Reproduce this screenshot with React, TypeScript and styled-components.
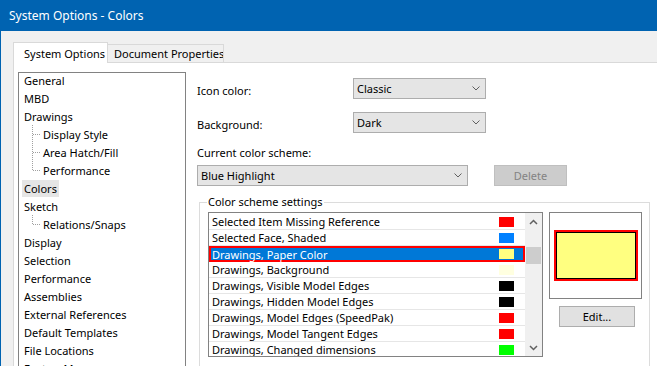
import React from 'react'
import styled, { createGlobalStyle } from 'styled-components'

const FONT = `"Noto Sans", "Liberation Sans", sans-serif`

const GlobalStyle = createGlobalStyle`
  html, body {
    margin: 0;
    padding: 0;
    background: #f0f0f0;
    overflow: hidden;
  }
  #root {
    width: 657px;
    height: 366px;
  }
`

const treeItems: { label: string; child?: boolean; last?: boolean; selected?: boolean }[] = [
  { label: 'General' },
  { label: 'MBD' },
  { label: 'Drawings' },
  { label: 'Display Style', child: true },
  { label: 'Area Hatch/Fill', child: true },
  { label: 'Performance', child: true, last: true },
  { label: 'Colors', selected: true },
  { label: 'Sketch' },
  { label: 'Relations/Snaps', child: true, last: true },
  { label: 'Display' },
  { label: 'Selection' },
  { label: 'Performance' },
  { label: 'Assemblies' },
  { label: 'External References' },
  { label: 'Default Templates' },
  { label: 'File Locations' },
  { label: 'FeatureManager' },
]

const schemeItems = [
  { label: 'Selected Item Missing Reference', color: '#ff0000' },
  { label: 'Selected Face, Shaded', color: '#0080ff' },
  { label: 'Drawings, Paper Color', color: '#ffff80', selected: true },
  { label: 'Drawings, Background', color: '#ffffe0' },
  { label: 'Drawings, Visible Model Edges', color: '#000000' },
  { label: 'Drawings, Hidden Model Edges', color: '#000000' },
  { label: 'Drawings, Model Edges (SpeedPak)', color: '#ff0000' },
  { label: 'Drawings, Model Tangent Edges', color: '#ff0000' },
  { label: 'Drawings, Changed dimensions', color: '#00ff00' },
]

const Chevron = ({ up }: { up?: boolean }) => (
  <svg width="8" height="5" viewBox="0 0 8 5">
    <polyline
      points={up ? '0.5,4.5 4,1 7.5,4.5' : '0.5,0.5 4,4 7.5,0.5'}
      fill="none"
      stroke="#606060"
      strokeWidth="1"
    />
  </svg>
)

const ScrollArrow = ({ up }: { up?: boolean }) => (
  <svg width="9" height="6" viewBox="0 0 9 6">
    <polyline
      points={up ? '1,5 4.5,1.5 8,5' : '1,1 4.5,4.5 8,1'}
      fill="none"
      stroke="#606060"
      strokeWidth="1.5"
    />
  </svg>
)

const Connector = ({ last }: { last?: boolean }) => (
  <svg width="9" height="18" viewBox="0 0 9 18">
    <line x1="0.5" y1="0" x2="0.5" y2={last ? 9 : 18} stroke="#a0a0a0" strokeDasharray="1 1" />
    <line x1="1" y1="9.5" x2="9" y2="9.5" stroke="#a0a0a0" strokeDasharray="1 1" />
  </svg>
)

const App: React.FC = () => {
  return (
    <>
      <GlobalStyle />
      <Window>
        <TitleBar>System Options - Colors</TitleBar>
        <TabStrip>
          <Tab active>System Options</Tab>
          <Tab>Document Properties</Tab>
        </TabStrip>
        <Panel>
          <Tree>
            <TreeList>
              {treeItems.map((item, i) => (
                <TreeRow key={i}>
                  {item.child && <Connector last={item.last} />}
                  <TreeLabel selected={item.selected}>{item.label}</TreeLabel>
                </TreeRow>
              ))}
            </TreeList>
          </Tree>

          <Settings>
            <FieldRow>
              <FieldLabel>Icon color:</FieldLabel>
              <Select width={133}>
                <span>Classic</span>
                <Chevron />
              </Select>
            </FieldRow>
            <FieldRow spaced>
              <FieldLabel>Background:</FieldLabel>
              <Select width={133}>
                <span>Dark</span>
                <Chevron />
              </Select>
            </FieldRow>

            <SchemeLabel>Current color scheme:</SchemeLabel>
            <SchemeRow>
              <Select width={271}>
                <span>Blue Highlight</span>
                <Chevron />
              </Select>
              <Button disabled width={73}>Delete</Button>
            </SchemeRow>

            <Group>
              <Legend>Color scheme settings</Legend>
              <GroupBody>
                <ListBox>
                  <ListRows>
                    {schemeItems.map((item, i) => (
                      <ListRow key={i} selected={item.selected}>
                        <span>{item.label}</span>
                        <Swatch style={{ background: item.color }} />
                      </ListRow>
                    ))}
                  </ListRows>
                  <ScrollBar>
                    <ScrollButton>
                      <ScrollArrow up />
                    </ScrollButton>
                    <ScrollThumb />
                    <ScrollTrack />
                    <ScrollButton>
                      <ScrollArrow />
                    </ScrollButton>
                  </ScrollBar>
                </ListBox>

                <PreviewColumn>
                  <Preview>
                    <PreviewSwatch />
                  </Preview>
                  <EditButton width={76}>Edit...</EditButton>
                </PreviewColumn>
              </GroupBody>
            </Group>
          </Settings>
        </Panel>
      </Window>
    </>
  )
}

const Window = styled.div`
  width: 657px;
  height: 366px;
  box-sizing: border-box;
  border-left: 1px solid #0063b1;
  display: flex;
  flex-direction: column;
  background: #f0f0f0;
  overflow: hidden;
  font-family: ${FONT};
  font-size: 11px;
  color: #000;
`

const TitleBar = styled.div`
  height: 31px;
  flex: none;
  display: flex;
  align-items: center;
  padding-left: 8px;
  background: #0063b1;
  color: #fff;
  font-size: 12px;
`

const TabStrip = styled.div`
  height: 31px;
  flex: none;
  display: flex;
  align-items: flex-end;
  padding-left: 12px;
`

const Tab = styled.div<{ active?: boolean }>`
  box-sizing: border-box;
  position: relative;
  height: ${(p) => (p.active ? 21 : 18)}px;
  margin-bottom: ${(p) => (p.active ? -1 : 0)}px;
  padding-left: ${(p) => (p.active ? 10 : 6)}px;
  width: ${(p) => (p.active ? 95 : 116)}px;
  border: 1px solid #d9d9d9;
  border-bottom: none;
  border-left: ${(p) => (p.active ? '1px solid #d9d9d9' : 'none')};
  background: ${(p) => (p.active ? '#fff' : '#f0f0f0')};
  display: flex;
  align-items: center;
  white-space: nowrap;
  overflow: hidden;
  z-index: ${(p) => (p.active ? 1 : 0)};
`

const Panel = styled.div`
  flex: 1;
  margin-left: 12px;
  border-top: 1px solid #d9d9d9;
  border-left: 1px solid #d9d9d9;
  background: #fff;
  display: flex;
  align-items: flex-start;
  padding: 9px 0 0 4px;
  min-height: 0;
`

const Tree = styled.div`
  box-sizing: border-box;
  width: 168px;
  height: 320px;
  flex: none;
  border: 1px solid #828282;
  overflow: hidden;
`

const TreeList = styled.div`
  margin-top: -2px;
`

const TreeRow = styled.div`
  height: 18px;
  display: flex;
  align-items: center;
  padding-left: 3px;
  white-space: nowrap;

  svg {
    margin-left: 10px;
    flex: none;
  }
`

const TreeLabel = styled.span<{ selected?: boolean }>`
  padding: 0 2px;
  line-height: 17px;
  background: ${(p) => (p.selected ? '#e5e5e5' : 'transparent')};
`

const Settings = styled.div`
  margin: 6px 0 0 11px;
  display: flex;
  flex-direction: column;
`

const FieldRow = styled.div<{ spaced?: boolean }>`
  height: 21px;
  display: flex;
  align-items: center;
  margin-top: ${(p) => (p.spaced ? 13 : 0)}px;
`

const FieldLabel = styled.span`
  width: 156px;
  padding-top: 4px;
`

const Select = styled.div<{ width: number }>`
  box-sizing: border-box;
  width: ${(p) => p.width}px;
  height: 21px;
  border: 1px solid #adadad;
  background: #e5e5e5;
  display: flex;
  align-items: center;
  justify-content: space-between;
  padding: 0 5px 0 3px;
`

const SchemeLabel = styled.div`
  margin-top: 12px;
  line-height: 16px;
`

const SchemeRow = styled.div`
  display: flex;
  align-items: center;
  gap: 26px;
  margin-top: 4px;
`

const Button = styled.div<{ width: number; disabled?: boolean }>`
  box-sizing: border-box;
  width: ${(p) => p.width}px;
  height: 21px;
  display: flex;
  align-items: center;
  justify-content: center;
  border: 1px solid ${(p) => (p.disabled ? '#bfbfbf' : '#adadad')};
  background: ${(p) => (p.disabled ? '#cccccc' : '#e1e1e1')};
  color: ${(p) => (p.disabled ? '#838383' : '#000')};
`

const Group = styled.fieldset`
  box-sizing: border-box;
  width: 451px;
  height: 200px;
  margin: 8px 0 0 2px;
  padding: 2px 7px 0 7px;
  border: 1px solid #dcdcdc;
  min-width: 0;
`

const Legend = styled.legend`
  padding: 0 1px;
  line-height: 16px;
`

const GroupBody = styled.div`
  display: flex;
  align-items: flex-start;
`

const ListBox = styled.div`
  box-sizing: border-box;
  width: 338px;
  height: 145px;
  margin-left: 1px;
  border: 1px solid #828282;
  display: flex;
  overflow: hidden;
`

const ListRows = styled.div`
  flex: 1;
  padding-top: 1px;
  display: flex;
  flex-direction: column;
`

const ListRow = styled.div<{ selected?: boolean }>`
  box-sizing: border-box;
  height: 16px;
  flex: none;
  display: flex;
  align-items: center;
  justify-content: space-between;
  padding: 0 ${(p) => (p.selected ? 9 : 11)}px 0 ${(p) => (p.selected ? 1 : 3)}px;
  border: ${(p) => (p.selected ? '2px solid #ff0000' : 'none')};
  border-bottom: ${(p) => (p.selected ? '2px solid #ff0000' : '1px solid #e6e6e6')};
  background: ${(p) => (p.selected ? '#0078d7' : 'transparent')};
  color: ${(p) => (p.selected ? '#fff' : '#000')};
  white-space: nowrap;
`

const Swatch = styled.span`
  width: 15px;
  height: 10px;
  flex: none;
`

const ScrollBar = styled.div`
  width: 17px;
  flex: none;
  background: #f0f0f0;
  display: flex;
  flex-direction: column;
`

const ScrollButton = styled.div`
  height: 17px;
  flex: none;
  display: flex;
  align-items: center;
  justify-content: center;
`

const ScrollThumb = styled.div`
  height: 17px;
  margin: 17px 1px 0 1px;
  background: #cdcdcd;
`

const ScrollTrack = styled.div`
  flex: 1;
`

const PreviewColumn = styled.div`
  margin-left: 6px;
  display: flex;
  flex-direction: column;
`

const Preview = styled.div`
  box-sizing: border-box;
  width: 93px;
  height: 87px;
  border: 1px solid #828282;
  display: flex;
  align-items: center;
  justify-content: center;
`

const PreviewSwatch = styled.div`
  box-sizing: border-box;
  width: 84px;
  height: 51px;
  border: 2px solid #ff0000;
  box-shadow: inset 0 0 0 1px #000;
  background: #ffff80;
`

const EditButton = styled(Button)`
  margin: 7px 0 0 10px;
`

export default App
